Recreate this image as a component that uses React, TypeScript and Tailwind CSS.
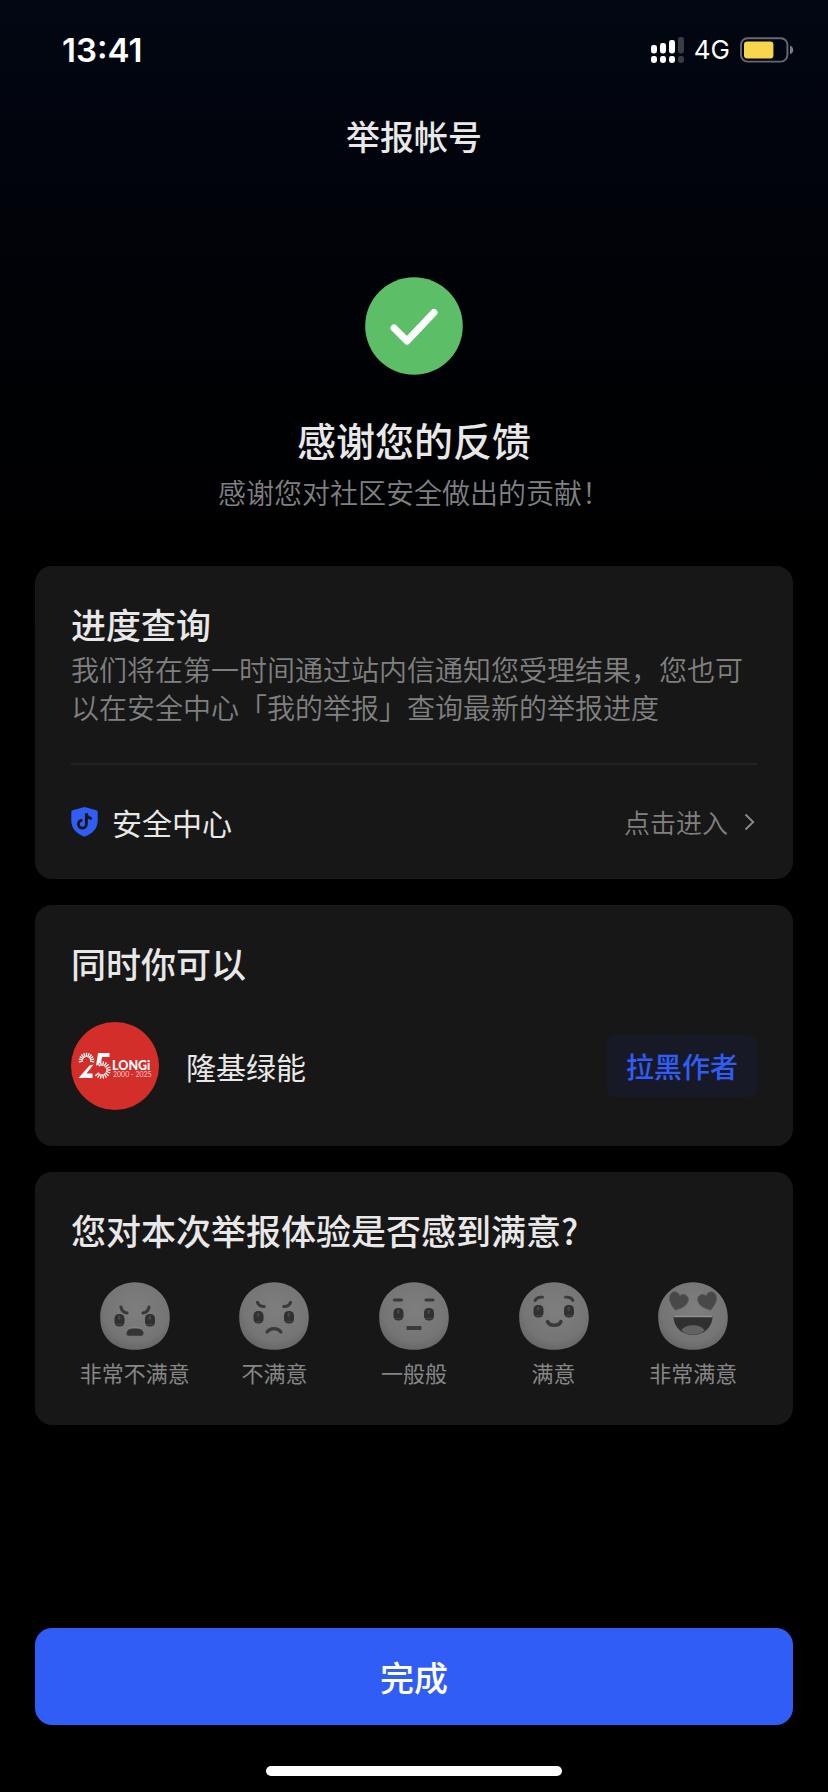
import type { ReactNode } from "react";

const ratings = ["非常不满意", "不满意", "一般般", "满意", "非常满意"];

function StatusBar() {
  return (
    <div className="flex h-[100px] items-center justify-between pl-[62px] pr-[34px] text-white">
      <span className="font-['Inter',sans-serif] text-[33px] font-semibold leading-none">13:41</span>
      <div className="flex items-center gap-[10px]">
        <svg width="33" height="26" viewBox="0 0 33 26" fill="#fff" aria-hidden="true">
          <rect x="0" y="8" width="6" height="8.5" rx="2.4" />
          <rect x="9" y="6" width="6" height="10.5" rx="2.4" />
          <rect x="18" y="3" width="6" height="13.5" rx="2.4" />
          <rect x="27" y="0" width="6" height="16.5" rx="2.4" opacity=".22" />
          <rect x="0" y="19" width="6" height="7" rx="2.4" />
          <rect x="9" y="19" width="6" height="7" rx="2.4" />
          <rect x="18" y="19" width="6" height="7" rx="2.4" />
          <rect x="27" y="19" width="6" height="7" rx="2.4" opacity=".22" />
        </svg>
        <span className="font-['Inter',sans-serif] text-[26px] leading-none">4G</span>
        <svg width="54" height="26" viewBox="0 0 54 26" aria-hidden="true">
          <rect x="1" y="1.2" width="46.4" height="23.4" rx="6.5" fill="none" stroke="#666971" strokeWidth="1.9" />
          <rect x="4" y="4.4" width="29.4" height="17" rx="3.2" fill="#f7d54c" />
          <path d="M50 8.6c2 .7 3.2 2.3 3.2 4.300s-1.200 3.600-3.200 4.300z" fill="#7b7d83" />
        </svg>
      </div>
    </div>
  );
}

function Card({ children }: { children: ReactNode }) {
  return <section className="rounded-[17px] bg-[#171717] px-9">{children}</section>;
}

function CardTitle({ children }: { children: ReactNode }) {
  return <h2 className="text-[35px] font-medium leading-[44px] text-[#e8e8e8]">{children}</h2>;
}

function ShieldIcon() {
  return (
    <svg width="27" height="30" viewBox="0 0 27 30" aria-hidden="true">
      <path d="M13.500 0 25.300 3.200a1.800 1.800 0 0 1 1.400 1.800v8.500c0 8-5.200 13.300-13.200 16.300C5.500 26.800.3 21.500.3 13.500V5a1.800 1.800 0 0 1 1.400-1.800z" fill="#305df6" />
      <path d="M15.400 6.300v10.800a4 4 0 1 1-4-4" fill="none" stroke="#171717" strokeWidth="2.900" />
      <path d="M15.400 6.500c.4 3 2.400 4.800 5.400 5.100" fill="none" stroke="#171717" strokeWidth="2.600" />
    </svg>
  );
}

const leftRays = [-190, -170, -150, -130, -110, -90, -70, -50, -30, -10, 10];
const rightRays = [-120, -100, -80, -60, -40, -20, 0, 20, 40, 60, 80, 100, 120, 140];

function rays(angles: number[], cx: number, cy: number, inner: number, outer: number) {
  return angles.map((a) => {
    const r = (a * Math.PI) / 180;
    return (
      <line
        key={a}
        x1={cx + inner * Math.cos(r)}
        y1={cy + inner * Math.sin(r)}
        x2={cx + outer * Math.cos(r)}
        y2={cy + outer * Math.sin(r)}
      />
    );
  });
}

function Avatar() {
  return (
    <svg width="88" height="88" viewBox="0 0 88 88" role="img" aria-label="LONGi">
      <circle cx="44" cy="44" r="44" fill="#d32e2a" />
      <g stroke="#fff" strokeWidth="1.300">
        {rays(leftRays, 15.5, 38.5, 3.5, 7.8)}
        {rays(rightRays, 31, 48, 4.2, 8.8)}
      </g>
      <path d="M7.500 56 18.500 43.500 22.500 42.500 15.500 51.500h6V56zM27 31h11.500v4H31l-.8 5-5.200 4z" fill="#fff" />
      <text x="41" y="47.500" fill="#fff" fontSize="12.500" fontWeight="900" fontFamily="Lato, sans-serif">LONGi</text>
      <text x="42" y="55" fill="#f6cac8" fontSize="7" fontFamily="Lato, sans-serif">2000 - 2025</text>
    </svg>
  );
}

function Eyes({ y }: { y: number }) {
  return (
    <g>
      {[19.5, 50].map((x) => (
        <g key={x}>
          <rect x={x - 5} y={y - 6} width="10" height="12.500" rx="4.600" fill="#303030" />
          <ellipse cx={x - 0.3} cy={y - 2.2} rx="1.400" ry="2.200" fill="#464646" />
          <path d={`M${x - 3} ${y + 4.5}h6`} stroke="#424242" strokeWidth="1.300" />
        </g>
      ))}
    </g>
  );
}

function Heart({ x, tilt }: { x: number; tilt: number }) {
  return (
    <path
      d="M0 9C-6 5-9.500 1.500-9.500-3.200-9.500-6.500-7.200-8.500-4.600-8.500-2.500-8.500-.8-7.300 0-5.500.8-7.300 2.500-8.500 4.600-8.500 7.200-8.500 9.500-6.500 9.500-3.200 9.500 1.500 6 5 0 9z"
      transform={`translate(${x} 19.500) rotate(${tilt})`}
      fill="#484848"
      stroke="#565656"
      strokeWidth=".8"
    />
  );
}

function Face({ kind }: { kind: number }) {
  const line = { fill: "none", stroke: "#3a3a3a", strokeWidth: 3.2, strokeLinecap: "round" as const };
  return (
    <svg width="70" height="68" viewBox="0 0 70 68" aria-hidden="true">
      <defs>
        <radialGradient id={`face-${kind}`} cx=".52" cy=".4" r=".62">
          <stop offset="0" stopColor="#7e7e7e" />
          <stop offset=".75" stopColor="#757575" />
          <stop offset="1" stopColor="#666" />
        </radialGradient>
      </defs>
      <path
        d="M35 .2C54 .2 69.800 15 69.800 35 69.800 47 65.500 54.500 60 59.500 54 65 45.500 67.800 35 67.800S16 65 10 59.500C4.500 54.500.2 47 .2 35 .2 15 16 .2 35 .2z"
        fill={`url(#face-${kind})`}
      />
      {kind === 0 && (
        <>
          <path d="M21 25c.6 3.500 2.600 5.600 6 6M49 25c-.6 3.500-2.600 5.600-6 6" {...line} />
          <Eyes y={38} />
          <path d="M26.500 51c.5-3.200 3-4.500 8.500-4.500s8 1.300 8.500 4.500c.2 2-1 2.800-3 2.800h-11c-2 0-3.200-.8-3-2.800z" fill="#353535" />
          <path d="M29 46q6-1.500 12.500 0" stroke="#858585" strokeWidth="1.200" fill="none" />
        </>
      )}
      {kind === 1 && (
        <>
          <path d="M18.500 20.500c1.200 3 3.200 4.200 6.700 4M51.500 20.500c-1.200 3-3.200 4.200-6.700 4" {...line} />
          <Eyes y={35} />
          <path d="M28 50c3.500-4.500 10.500-4.500 14 0" {...line} />
        </>
      )}
      {kind === 2 && (
        <>
          <path d="M15.500 18h7M47 18h7" {...line} />
          <Eyes y={32} />
          <path d="M27.500 46h15" {...line} strokeWidth={4} strokeLinecap="butt" />
        </>
      )}
      {kind === 3 && (
        <>
          <path d="M16 18.500c1.500-2.800 4-3.800 7.500-3.300M54 18.500c-1.500-2.800-4-3.800-7.500-3.300" {...line} strokeWidth={2.8} />
          <Eyes y={29} />
          <path d="M28.500 39.500c2 5 11.500 5 13.500 0" {...line} strokeWidth={3.5} />
        </>
      )}
      {kind === 4 && (
        <>
          <Heart x={20} tilt={17} />
          <Heart x={50} tilt={-17} />
          <path d="M15.500 34.500h39C54.500 45 46 53 35 53S15.500 45 15.500 34.500z" fill="#303030" />
          <path d="M23.500 48.500c3-7 20-7 23 0-6 5.800-17 5.800-23 0z" fill="#626262" />
          <path d="M16 34.500h38" stroke="#909090" strokeWidth="1.600" />
        </>
      )}
    </svg>
  );
}

export default function App() {
  return (
    <div className="flex min-h-screen flex-col bg-black bg-linear-to-b from-[#020713] to-black to-50% font-['Noto_Sans_CJK_SC',sans-serif]">
      <StatusBar />
      <header className="flex h-[72px] items-center justify-center">
        <h1 className="text-[34px] font-medium leading-[48px] text-[#e8e8e8]">举报帐号</h1>
      </header>

      <main className="flex grow flex-col px-[35px] pt-[105px]">
        <div className="flex flex-col items-center text-center">
          <svg width="98" height="98" viewBox="0 0 98 98" aria-hidden="true">
            <circle cx="49" cy="49" r="48.800" fill="#5cbf68" />
            <path d="M29 51 42 64 69 35.500" fill="none" stroke="#fff" strokeWidth="7" strokeLinecap="round" strokeLinejoin="round" />
          </svg>
          <h2 className="mt-9 text-[39px] font-medium leading-[56px] text-[#e8e8e8]">感谢您的反馈</h2>
          <p className="mt-[6px] text-[28px] font-[350] leading-[38px] text-[#7f8082]">感谢您对社区安全做出的贡献！</p>
        </div>

        <div className="mt-[55px] flex flex-col gap-[26px]">
          <Card>
            <div className="border-b-2 border-[#222] pb-[37px] pt-9">
              <CardTitle>进度查询</CardTitle>
              <p className="mt-1 text-[28px] font-[350] leading-[38px] text-[#808080]">
                我们将在第一时间通过站内信通知您受理结果，您也可以在安全中心「我的举报」查询最新的举报进度
              </p>
            </div>
            <a href="#safety" className="flex h-[114px] items-center">
              <ShieldIcon />
              <span className="ml-[14px] grow text-[30px] leading-[44px] text-[#e8e8e8]">安全中心</span>
              <span className="text-[26px] font-[350] leading-[38px] text-[#808080]">点击进入</span>
              <svg className="ml-4 mr-[2px]" width="11" height="18" viewBox="0 0 11 18" aria-hidden="true">
                <path d="M1.500 1.500 9.200 9 1.500 16.500" fill="none" stroke="#8a8a8a" strokeWidth="1.900" />
              </svg>
            </a>
          </Card>

          <Card>
            <div className="py-9">
              <CardTitle>同时你可以</CardTitle>
              <div className="mt-[37px] flex items-center">
                <Avatar />
                <span className="ml-[27px] grow text-[30px] leading-[44px] text-[#e8e8e8]">隆基绿能</span>
                <button type="button" className="rounded-lg bg-[#171a26] px-[19px] py-3 text-[28px] font-medium leading-[38px] text-[#305df6]">
                  拉黑作者
                </button>
              </div>
            </div>
          </Card>

          <Card>
            <div className="py-9">
              <CardTitle>您对本次举报体验是否感到满意?</CardTitle>
              <div className="-mx-[6px] mt-[30px] grid grid-cols-5">
                {ratings.map((label, i) => (
                  <button key={label} type="button" className="flex flex-col items-center gap-[5px]">
                    <Face kind={i} />
                    <span className="whitespace-nowrap text-[22px] leading-[34px] text-[#868686]">{label}</span>
                  </button>
                ))}
              </div>
            </div>
          </Card>
        </div>
      </main>

      <footer className="flex flex-col items-center px-[35px] pb-4">
        <button type="button" className="h-[97px] w-full rounded-[17px] bg-[#305df6] text-[34px] font-medium text-white">
          完成
        </button>
        <div className="mt-[41px] h-[10px] w-[296px] rounded-full bg-white" />
      </footer>
    </div>
  );
}
